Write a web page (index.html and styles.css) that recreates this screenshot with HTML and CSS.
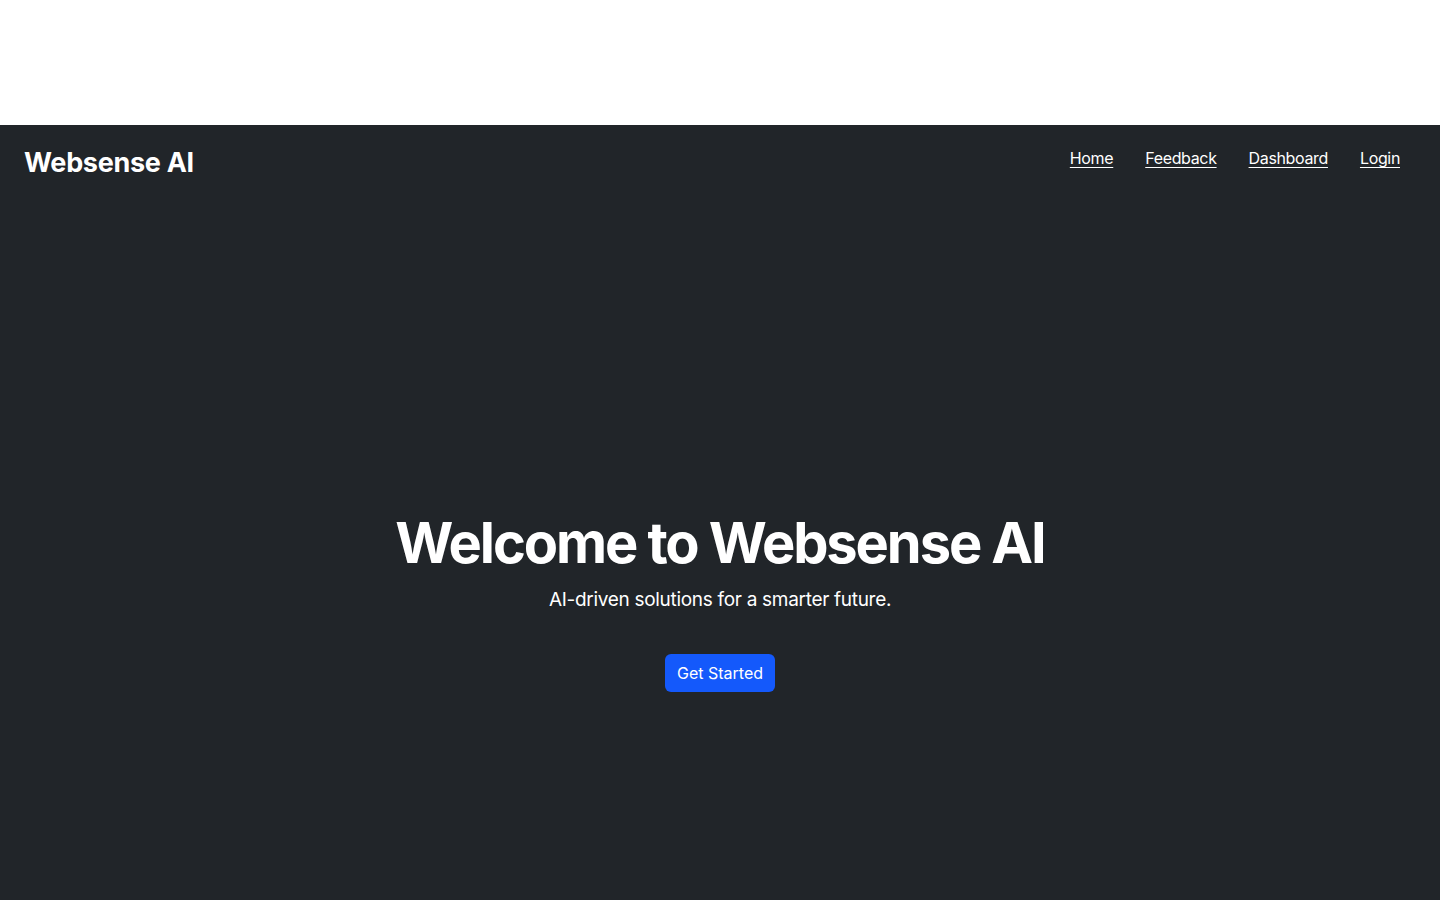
FILE: index.html
```html
<!DOCTYPE html>
<html lang="en">
<head>
<meta charset="utf-8">
<title>Websense AI</title>
<link rel="stylesheet" href="styles.css">
</head>
<body>
<div class="top-space"></div>
<div class="page">
  <nav class="navbar">
    <a class="brand" href="#">Websense AI</a>
    <ul class="nav-links">
      <li><a href="#">Home</a></li>
      <li><a href="#">Feedback</a></li>
      <li><a href="#">Dashboard</a></li>
      <li><a href="#">Login</a></li>
    </ul>
  </nav>
  <section class="hero">
    <h1 class="hero-title">Welcome to Websense AI</h1>
    <p class="hero-lead">AI-driven solutions for a smarter future.</p>
    <a class="btn-primary" href="#">Get Started</a>
  </section>
</div>
</body>
</html>
```
FILE: styles.css
```css
* { box-sizing: border-box; }
html, body { margin: 0; padding: 0; }
body {
  font-family: Inter, "Noto Sans", "Liberation Sans", sans-serif;
  background: #ffffff;
  color: #ffffff;
  overflow: hidden;
}
.top-space { height: 125px; background: #ffffff; }
.page {
  background: #212529;
  height: 775px;
  display: flex;
  flex-direction: column;
}
.navbar {
  display: flex;
  justify-content: space-between;
  align-items: flex-start;
  padding: 14px 40px 0 24px;
}
.brand {
  color: #ffffff;
  text-decoration: none;
  font-weight: 700;
  font-size: 27px;
  line-height: 48px;
  letter-spacing: -0.3px;
}
.nav-links {
  list-style: none;
  display: flex;
  gap: 32px;
  margin: 0;
  padding: 0;
}
.nav-links a {
  color: #ffffff;
  font-size: 16px;
  line-height: 38px;
  letter-spacing: -0.35px;
  text-decoration: underline;
  text-underline-offset: 3px;
}
.hero {
  display: flex;
  flex-direction: column;
  align-items: center;
  text-align: center;
  padding-top: 323px;
}
.hero-title {
  margin: 0;
  font-size: 56px;
  font-weight: 700;
  line-height: 1.2;
  letter-spacing: -2.1px;
}
.hero-lead {
  margin: 9px 0 39px;
  font-size: 19px;
  line-height: 1.5;
  letter-spacing: -0.3px;
}
.btn-primary {
  display: inline-block;
  background: #1459fb;
  color: #ffffff;
  text-decoration: none;
  font-size: 16px;
  line-height: 24px;
  padding: 7px 12px;
  border-radius: 6px;
}
```
